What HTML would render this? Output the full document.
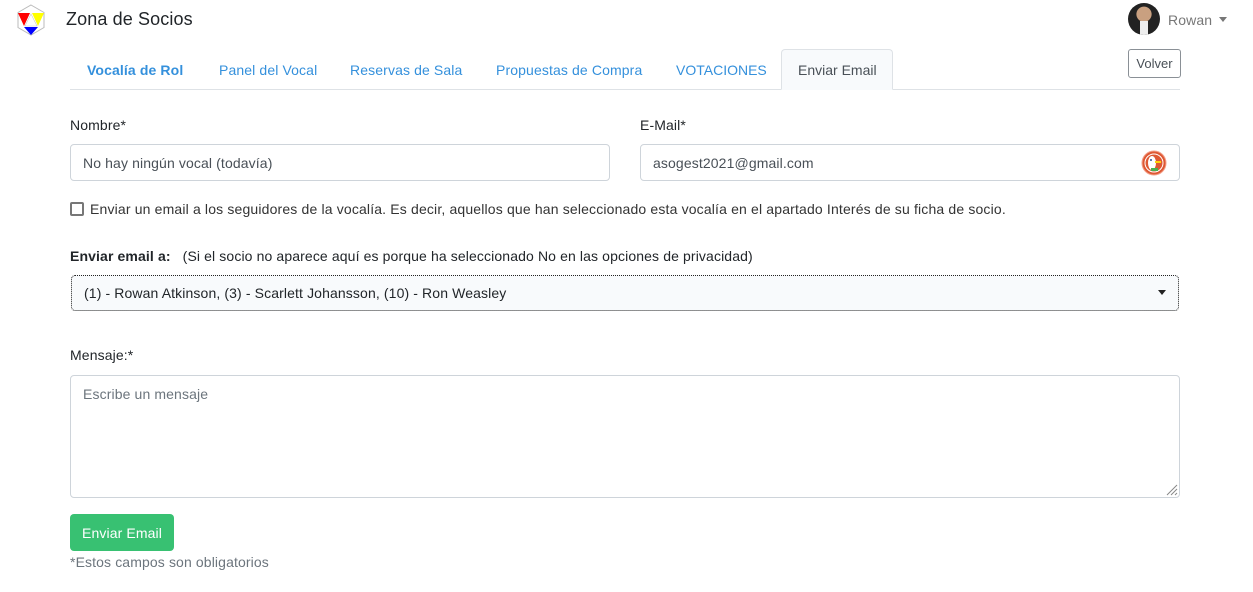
<!DOCTYPE html>
<html><head><meta charset="utf-8"><style>
*{box-sizing:border-box;margin:0;padding:0}
body{width:1253px;height:592px;background:#fff;font-family:"Liberation Sans",sans-serif;font-size:14px;color:#212529;position:relative;overflow:hidden;letter-spacing:0.12px}
.a{position:absolute;white-space:nowrap}
.tab{position:absolute;top:62px;color:#3490dc;font-size:14px}
.inp{position:absolute;border:1px solid #ced4da;border-radius:4px;background:#fff;padding:0 12px;display:flex;align-items:center;color:#495057}
</style></head><body>
<svg class="a" style="left:15px;top:4px" width="32" height="32" viewBox="0 0 32 32">
<polygon points="16,1 29,8.5 29,23.5 16,31 3,23.5 3,8.5" fill="none" stroke="#bbb" stroke-width="1"/>
<polygon points="3,9 15,9 9,22" fill="#f00"/>
<polygon points="17,9 29,9 23,22" fill="#ff0"/>
<polygon points="9,23 23,23 16,31" fill="#00f"/>
<polygon points="10,22 16,10 22,22" fill="#fff" stroke="#ccc" stroke-width=".6"/>
</svg>
<div class="a" style="left:66px;top:9px;font-size:18px;color:#212529">Zona de Socios</div>
<div class="a" style="left:1128px;top:3px;width:32px;height:32px;border-radius:50%;background:radial-gradient(circle at 50% 35%,#c9a080 0 28%,#222 30% 100%);overflow:hidden"><div style="position:absolute;left:12px;top:18px;width:8px;height:14px;background:#eee"></div></div>
<div class="a" style="left:1168px;top:12px;color:#777">Rowan</div>
<div class="a" style="left:1219px;top:17px;border:4px solid transparent;border-top:5px solid #777"></div>
<div class="a" style="left:1128px;top:49px;width:53px;height:29px;border:1px solid #8a9096;border-radius:3px;font-size:13px;color:#495057;display:flex;align-items:center;justify-content:center;letter-spacing:0">Volver</div>
<div class="a" style="left:70px;top:89px;width:1110px;height:1px;background:#dee2e6"></div>
<div class="a" style="left:781px;top:49px;width:112px;height:41px;border:1px solid #dee2e6;border-bottom:1px solid #f8fafc;border-radius:4px 4px 0 0;background:#f8fafc"></div>
<div class="tab" style="left:87px;font-weight:bold">Vocalía de Rol</div>
<div class="tab" style="left:219px">Panel del Vocal</div>
<div class="tab" style="left:350px">Reservas de Sala</div>
<div class="tab" style="left:496px">Propuestas de Compra</div>
<div class="tab" style="left:676px;letter-spacing:0">VOTACIONES</div>
<div class="tab" style="left:798px;color:#495057;letter-spacing:0">Enviar Email</div>
<div class="a" style="left:70px;top:117px">Nombre*</div>
<div class="a" style="left:640px;top:117px">E-Mail*</div>
<div class="inp" style="left:70px;top:144px;width:540px;height:37px">No hay ningún vocal (todavía)</div>
<div class="inp" style="left:640px;top:144px;width:540px;height:37px">asogest2021@gmail.com</div>
<svg class="a" style="left:1141px;top:150px" width="26" height="26" viewBox="0 0 26 26"><circle cx="13" cy="13" r="12" fill="#de5833" stroke="#f3a08a" stroke-width="1"/><circle cx="13" cy="13" r="9" fill="#de5833" stroke="#fff" stroke-width="1"/><ellipse cx="11" cy="13" rx="4" ry="7" fill="#fff"/><rect x="14" y="11" width="6" height="2" fill="#fdd20a"/><rect x="10" y="18" width="7" height="3" fill="#4caf50"/><circle cx="10" cy="10" r="1" fill="#2d4f8e"/></svg>
<div class="a" style="left:70px;top:202px;width:14px;height:14px;border:2px solid #777;border-radius:2px"></div>
<div class="a" style="left:90px;top:201px;color:#333;letter-spacing:0.16px">Enviar un email a los seguidores de la vocalía. Es decir, aquellos que han seleccionado esta vocalía en el apartado Interés de su ficha de socio.</div>
<div class="a" style="left:70px;top:248px"><b>Enviar email a:</b>&nbsp;&nbsp;&nbsp;(Si el socio no aparece aquí es porque ha seleccionado No en las opciones de privacidad)</div>
<div class="inp" style="left:71px;top:275px;width:1108px;height:36px;border:1px dotted #222;background:#f8fafc;color:#212529">(1) - Rowan Atkinson, (3) - Scarlett Johansson, (10) - Ron Weasley</div>
<div class="a" style="left:1158px;top:290px;border:4px solid transparent;border-top:5px solid #222"></div>
<div class="a" style="left:70px;top:347px">Mensaje:*</div>
<div class="inp" style="left:70px;top:375px;width:1110px;height:123px;align-items:flex-start;padding-top:10px;color:#6c757d">Escribe un mensaje</div>
<svg class="a" style="left:1164px;top:482px" width="14" height="14"><path d="M13 3L3 13M13 7L7 13M13 11L11 13" stroke="#888" stroke-width="1"/></svg>
<div class="a" style="left:70px;top:514px;width:104px;height:37px;background:#38c172;border-radius:4px;color:#fff;display:flex;align-items:center;justify-content:center">Enviar Email</div>
<div class="a" style="left:70px;top:554px;color:#6c757d">*Estos campos son obligatorios</div>
</body></html>
